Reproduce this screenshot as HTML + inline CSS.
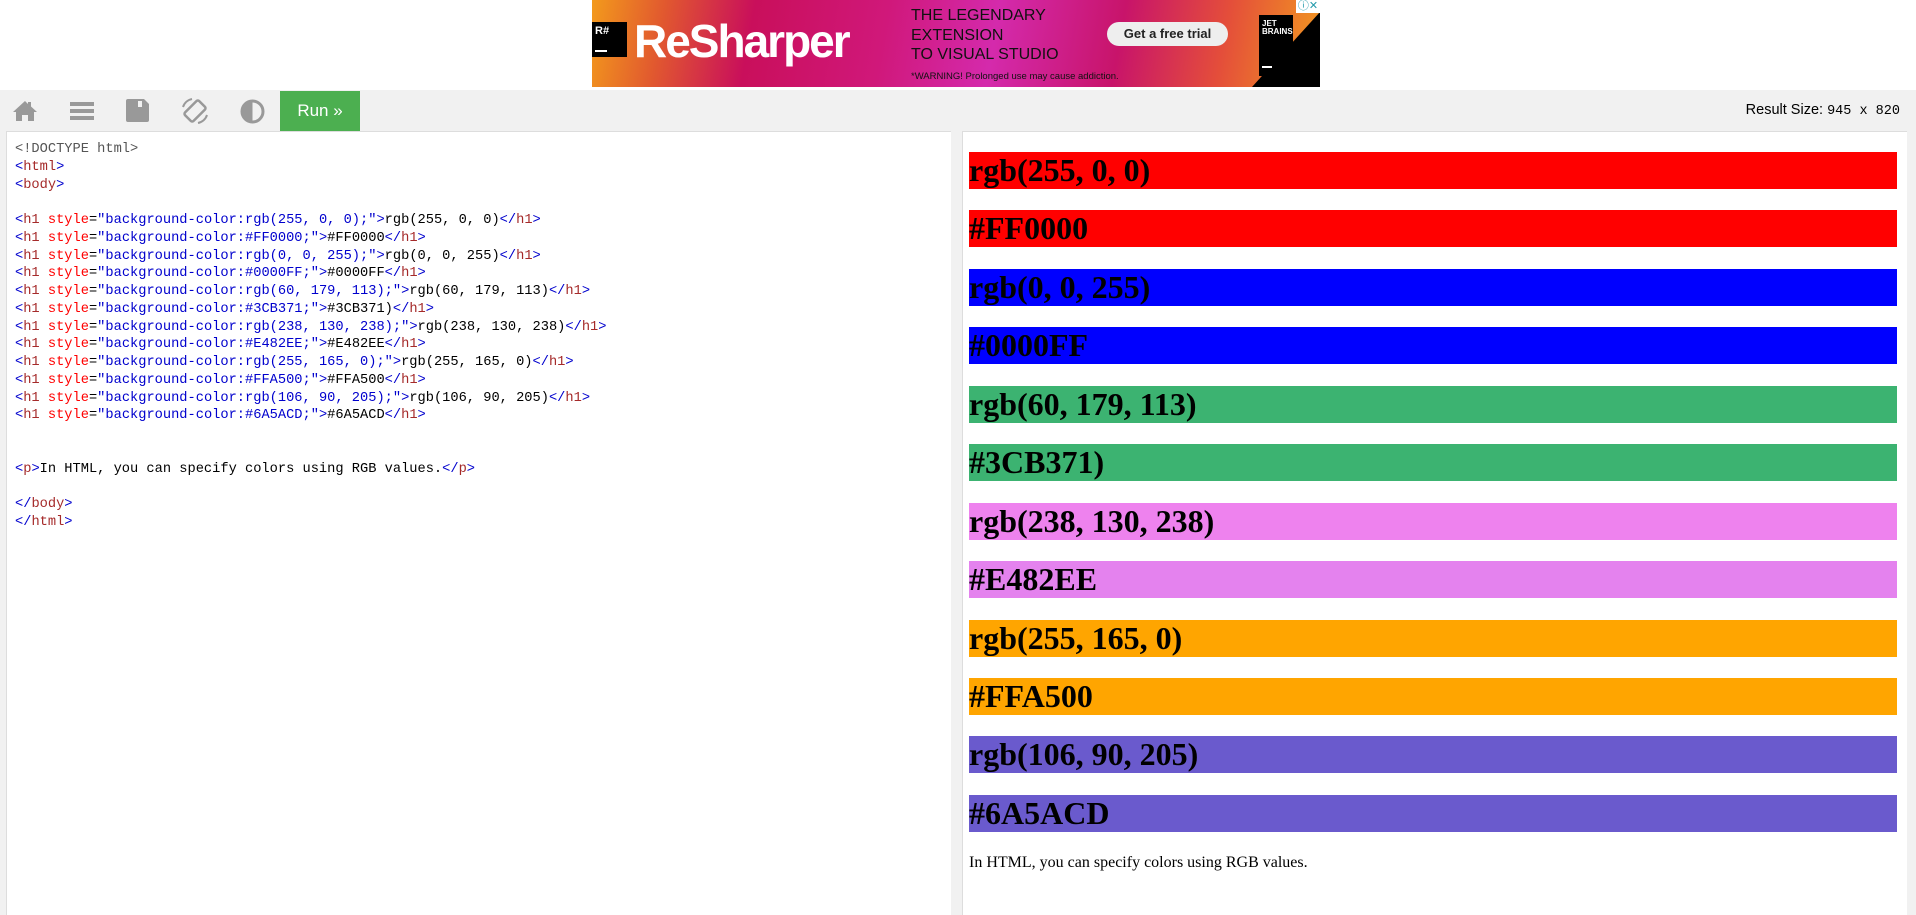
<!DOCTYPE html>
<html><head><meta charset="utf-8"><style>
*{box-sizing:border-box}
body{margin:0;width:1916px;height:915px;background:#fff;position:relative;overflow:hidden;font-family:"Liberation Sans",sans-serif}
.abs{position:absolute}
#ad{left:592px;top:0;width:728px;height:87px;overflow:hidden;background:linear-gradient(100deg,#f39a1c 0%,#e1582f 10%,#c90f5b 22%,#d0187a 40%,#d42aac 55%,#c8146a 72%,#e44e3a 86%,#f29a20 100%)}
#toolbar{left:0;top:90px;width:1916px;height:41px;background:#f1f1f1}
.code{font-family:"Liberation Mono",monospace;font-size:13.7px;line-height:17.75px;white-space:pre;color:#000}
.t{color:#a52a2a}.b{color:#0000cd}.a{color:#f00}.v{color:#0000cd}.c{color:#555}
h1{margin:0 0 21.45px;height:37px;line-height:37px;font-family:"Liberation Serif",serif;font-size:32px;font-weight:bold;padding-left:0;white-space:nowrap}
</style></head><body>
<div id="ad" class="abs">
 <div class="abs" style="left:0;top:22px;width:35px;height:35px;background:#000;color:#fff;font-weight:bold;font-size:11px;padding:3px 0 0 3px">R#<div style="position:absolute;left:3px;bottom:5px;width:12px;height:2px;background:#fff"></div></div>
 <div class="abs" style="left:42px;top:14px;color:#fff;font-weight:bold;font-size:46px;letter-spacing:-2px">ReSharper</div>
 <div class="abs" style="left:319px;top:6px;color:#111;font-size:16px;line-height:19.5px">THE LEGENDARY<br>EXTENSION<br>TO VISUAL STUDIO</div>
 <div class="abs" style="left:319px;top:71px;color:#111;font-size:9.5px">*WARNING! Prolonged use may cause addiction.</div>
 <div class="abs" style="left:515px;top:22px;width:121px;height:24px;border-radius:12px;background:#eee;color:#222;font-weight:bold;font-size:13px;text-align:center;line-height:24px">Get a free trial</div>
 <svg class="abs" style="left:640px;top:0" width="88" height="87"><polygon points="20,87 88,12 88,87" fill="#000"/></svg>
 <div class="abs" style="left:667px;top:15px;width:34px;height:61px;background:#000;color:#fff;font-weight:bold;font-size:8px;line-height:8px;padding:5px 0 0 3px">JET<br>BRAINS<div style="position:absolute;left:3px;bottom:8px;width:10px;height:2px;background:#fff"></div></div>
 <div class="abs" style="left:704px;top:0;width:24px;height:13px;background:#fff;color:#29a;font-size:11px;line-height:13px;text-align:center">ⓘ✕</div>
</div>
<div id="toolbar" class="abs">
 <svg class="abs" style="left:12px;top:10px" width="26" height="22" viewBox="0 0 26 22"><path d="M13 1 L1 12 L4 12 L4 21 L10 21 L10 15 L16 15 L16 21 L22 21 L22 12 L25 12 L19 6.5 L19 2 L16 2 L16 4 Z" fill="#999"/></svg>
 <svg class="abs" style="left:70px;top:11px" width="24" height="20"><rect x="0" y="1" width="24" height="4" fill="#999"/><rect x="0" y="8" width="24" height="4" fill="#999"/><rect x="0" y="15" width="24" height="4" fill="#999"/></svg>
 <svg class="abs" style="left:126px;top:9px" width="23" height="23"><path d="M2 0 H18 L23 5 V21 a2 2 0 0 1 -2 2 H2 a2 2 0 0 1 -2 -2 V2 a2 2 0 0 1 2 -2Z" fill="#999"/><rect x="12" y="2" width="4" height="6" fill="#f1f1f1"/></svg>
 <svg class="abs" style="left:180px;top:7px" width="30" height="28" viewBox="0 0 30 28"><rect x="9" y="4" width="12" height="20" rx="2" transform="rotate(45 15 14)" fill="none" stroke="#999" stroke-width="2.5"/><path d="M3 10 A12 12 0 0 1 12 2" fill="none" stroke="#999" stroke-width="2"/><path d="M27 18 A12 12 0 0 1 18 26" fill="none" stroke="#999" stroke-width="2"/></svg>
 <svg class="abs" style="left:240px;top:9px" width="25" height="25"><circle cx="12.5" cy="12.5" r="10.5" fill="none" stroke="#999" stroke-width="3"/><path d="M12.5 2 A10.5 10.5 0 0 0 12.5 23Z" fill="#999"/></svg>
 <div class="abs" style="left:280px;top:1px;width:80px;height:40px;background:#4caf50;color:#fff;font-size:17px;line-height:40px;text-align:center">Run »</div>
 <div class="abs" style="right:16px;top:12px;font-size:14.5px;color:#000">Result Size: <span style="font-family:'Liberation Mono',monospace;font-size:13.5px">945 x 820</span></div>
</div>
<div class="abs" style="left:0;top:131px;width:6px;height:784px;background:#f1f1f1"></div>
<div class="abs" style="left:951px;top:131px;width:11px;height:784px;background:#f1f1f1"></div>
<div class="abs" style="left:1907px;top:131px;width:9px;height:784px;background:#f1f1f1"></div>
<div class="abs" style="left:6px;top:131px;width:945px;height:784px;border-left:1px solid #ddd;border-top:1px solid #ddd"></div>
<div class="abs" style="left:962px;top:131px;width:945px;height:784px;border-left:1px solid #ddd;border-top:1px solid #ddd"></div>
<div class="abs code" style="left:15px;top:141px"><span class="c">&lt;!DOCTYPE html&gt;</span>
<span class="b">&lt;</span><span class="t">html</span><span class="b">&gt;</span>
<span class="b">&lt;</span><span class="t">body</span><span class="b">&gt;</span>

<span class="b">&lt;</span><span class="t">h1</span> <span class="a">style</span>=<span class="v">"background-color:rgb(255, 0, 0);"</span><span class="b">&gt;</span>rgb(255, 0, 0)<span class="b">&lt;/</span><span class="t">h1</span><span class="b">&gt;</span>
<span class="b">&lt;</span><span class="t">h1</span> <span class="a">style</span>=<span class="v">"background-color:#FF0000;"</span><span class="b">&gt;</span>#FF0000<span class="b">&lt;/</span><span class="t">h1</span><span class="b">&gt;</span>
<span class="b">&lt;</span><span class="t">h1</span> <span class="a">style</span>=<span class="v">"background-color:rgb(0, 0, 255);"</span><span class="b">&gt;</span>rgb(0, 0, 255)<span class="b">&lt;/</span><span class="t">h1</span><span class="b">&gt;</span>
<span class="b">&lt;</span><span class="t">h1</span> <span class="a">style</span>=<span class="v">"background-color:#0000FF;"</span><span class="b">&gt;</span>#0000FF<span class="b">&lt;/</span><span class="t">h1</span><span class="b">&gt;</span>
<span class="b">&lt;</span><span class="t">h1</span> <span class="a">style</span>=<span class="v">"background-color:rgb(60, 179, 113);"</span><span class="b">&gt;</span>rgb(60, 179, 113)<span class="b">&lt;/</span><span class="t">h1</span><span class="b">&gt;</span>
<span class="b">&lt;</span><span class="t">h1</span> <span class="a">style</span>=<span class="v">"background-color:#3CB371;"</span><span class="b">&gt;</span>#3CB371)<span class="b">&lt;/</span><span class="t">h1</span><span class="b">&gt;</span>
<span class="b">&lt;</span><span class="t">h1</span> <span class="a">style</span>=<span class="v">"background-color:rgb(238, 130, 238);"</span><span class="b">&gt;</span>rgb(238, 130, 238)<span class="b">&lt;/</span><span class="t">h1</span><span class="b">&gt;</span>
<span class="b">&lt;</span><span class="t">h1</span> <span class="a">style</span>=<span class="v">"background-color:#E482EE;"</span><span class="b">&gt;</span>#E482EE<span class="b">&lt;/</span><span class="t">h1</span><span class="b">&gt;</span>
<span class="b">&lt;</span><span class="t">h1</span> <span class="a">style</span>=<span class="v">"background-color:rgb(255, 165, 0);"</span><span class="b">&gt;</span>rgb(255, 165, 0)<span class="b">&lt;/</span><span class="t">h1</span><span class="b">&gt;</span>
<span class="b">&lt;</span><span class="t">h1</span> <span class="a">style</span>=<span class="v">"background-color:#FFA500;"</span><span class="b">&gt;</span>#FFA500<span class="b">&lt;/</span><span class="t">h1</span><span class="b">&gt;</span>
<span class="b">&lt;</span><span class="t">h1</span> <span class="a">style</span>=<span class="v">"background-color:rgb(106, 90, 205);"</span><span class="b">&gt;</span>rgb(106, 90, 205)<span class="b">&lt;/</span><span class="t">h1</span><span class="b">&gt;</span>
<span class="b">&lt;</span><span class="t">h1</span> <span class="a">style</span>=<span class="v">"background-color:#6A5ACD;"</span><span class="b">&gt;</span>#6A5ACD<span class="b">&lt;/</span><span class="t">h1</span><span class="b">&gt;</span>


<span class="b">&lt;</span><span class="t">p</span><span class="b">&gt;</span>In HTML, you can specify colors using RGB values.<span class="b">&lt;/</span><span class="t">p</span><span class="b">&gt;</span>

<span class="b">&lt;/</span><span class="t">body</span><span class="b">&gt;</span>
<span class="b">&lt;/</span><span class="t">html</span><span class="b">&gt;</span></div>
<div class="abs" style="left:969px;top:152px;width:928px">
<h1 style="background:rgb(255,0,0)">rgb(255, 0, 0)</h1>
<h1 style="background:#FF0000">#FF0000</h1>
<h1 style="background:rgb(0,0,255)">rgb(0, 0, 255)</h1>
<h1 style="background:#0000FF">#0000FF</h1>
<h1 style="background:rgb(60,179,113)">rgb(60, 179, 113)</h1>
<h1 style="background:#3CB371">#3CB371)</h1>
<h1 style="background:rgb(238,130,238)">rgb(238, 130, 238)</h1>
<h1 style="background:#E482EE">#E482EE</h1>
<h1 style="background:rgb(255,165,0)">rgb(255, 165, 0)</h1>
<h1 style="background:#FFA500">#FFA500</h1>
<h1 style="background:rgb(106,90,205)">rgb(106, 90, 205)</h1>
<h1 style="background:#6A5ACD">#6A5ACD</h1>
<p style="margin:0;font-family:'Liberation Serif',serif;font-size:16px;line-height:19px">In HTML, you can specify colors using RGB values.</p>
</div>
</body></html>
